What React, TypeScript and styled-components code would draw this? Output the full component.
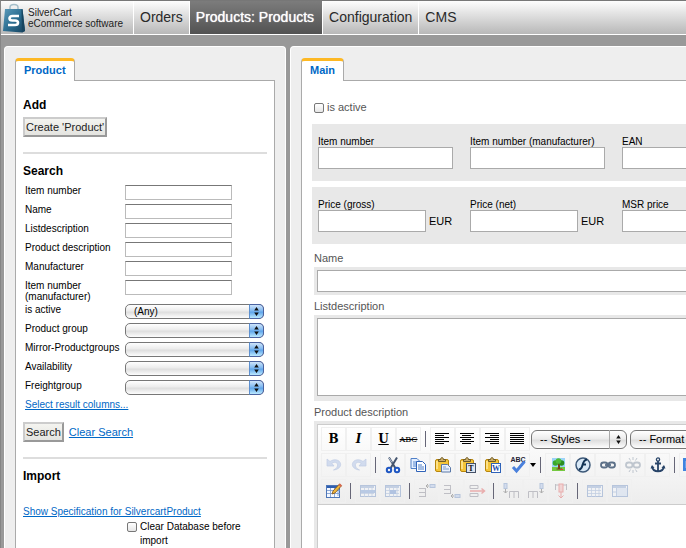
import React from "react";
import styled, { createGlobalStyle, css } from "styled-components";

const GlobalStyle = createGlobalStyle`
  * { box-sizing: border-box; }
  body {
    margin: 0;
    background: #999;
    font-family: "Liberation Sans", Arial, sans-serif;
    font-size: 11px;
    color: #000;
  }
  input, select, button, textarea { font-family: inherit; margin: 0; }
  h2, form, nav { margin: 0; }
`;

/* ---------- page frame ---------- */

const Page = styled.div`
  height: 100vh;
  overflow: hidden;
  display: flex;
  flex-direction: column;
  border-top: 1px solid #777;
  border-left: 1px solid #858585;
`;

const Header = styled.header`
  display: flex;
  flex: none;
  height: 34px;
  background: linear-gradient(#fdfdfd, #b8b8b8);
  border-bottom: 1px solid #fff;
`;

const Brand = styled.a`
  display: flex;
  align-items: center;
  gap: 3px;
  width: 133px;
  padding-left: 2px;
  border-right: 1px solid #fff;
  color: #222;
  font-size: 10px;
  line-height: 11px;
  text-decoration: none;
  white-space: nowrap;
`;

const Nav = styled.nav`
  display: flex;
`;

const NavLink = styled.a<{ $active?: boolean; $last?: boolean }>`
  display: flex;
  align-items: center;
  padding: 0 6px 1px;
  border-right: ${(p) => (p.$last ? "none" : "1px solid #fff")};
  color: #2a2a2a;
  font-size: 14px;
  text-decoration: none;
  white-space: nowrap;
  ${(p) =>
    p.$active &&
    css`
      padding: 0 8px 1px 6px;
      color: #fff;
      background: linear-gradient(#7c7c7c, #525252);
      text-shadow: 0 0 1px #fff;
    `}
`;

const Workspace = styled.div`
  display: flex;
  flex: 1;
  gap: 4px;
  min-height: 0;
  padding: 11px 0 0 3px;
`;

const panel = css`
  display: flex;
  flex-direction: column;
  padding: 11px 10px 0 10px;
  background: #eee;
  border: 1px solid #fff;
  border-bottom: none;
  border-radius: 4px 4px 0 0;
`;

const Sidebar = styled.aside`
  ${panel}
  flex: none;
  width: 282px;
`;

const Main = styled.main`
  ${panel}
  flex: 1;
  min-width: 640px;
`;

const TabStrip = styled.div`
  display: flex;
  margin-bottom: -1px;
  z-index: 1;
`;

const Tab = styled.a`
  padding: 3px 8px 4px;
  background: #fff;
  border: 1px solid #aaa;
  border-top: 3px solid #fdb824;
  border-bottom: none;
  border-radius: 4px 4px 0 0;
  color: #0068c6;
  font-size: 11px;
  font-weight: bold;
  line-height: 13px;
  text-decoration: none;
`;

const Sheet = styled.section`
  flex: 1;
  background: #fff;
  border: 1px solid #aaa;
  border-bottom: none;
`;

/* ---------- sidebar ---------- */

const SideSheet = styled(Sheet)`
  padding: 17px 7px 0;
`;

const Heading = styled.h2`
  font-size: 12px;
  line-height: 14px;
`;

const Rule = styled.hr`
  height: 2px;
  margin: 15px 0 10px;
  border: none;
  background: #ddd;
`;

const Button = styled.button`
  height: 20px;
  padding: 0 1px;
  border: 2px solid;
  border-color: #ccc #999 #999 #ccc;
  background: linear-gradient(#f4f4f0, #e4e4e0);
  color: #222;
  font-size: 11px;
  line-height: 14px;
`;

const Link = styled.a`
  color: #0068c6;
  text-decoration: underline;
`;

const AddForm = styled.form`
  padding-top: 5px;
`;

const Fields = styled.div`
  padding: 7px 0 0 2px;
  font-size: 10px;
  line-height: 11px;
`;

const FieldRow = styled.div<{ $tall?: boolean }>`
  display: grid;
  grid-template-columns: 100px 1fr;
  align-items: start;
  height: ${(p) => (p.$tall ? "24px" : "19px")};
`;

const FieldLabel = styled.label`
  white-space: pre-line;
`;

const SearchInput = styled.input`
  width: 107px;
  height: 15px;
  padding: 0 2px;
  border: 1px solid #bbb;
  border-top: 1px solid #777;
  background: #fff;
  font-size: 10px;
`;

const ActionRow = styled.div`
  display: flex;
  align-items: center;
  gap: 5px;
  padding-top: 12px;
`;

const ImportBlock = styled.div`
  padding-top: 22px;
  font-size: 10px;
  line-height: 14px;
`;

const ClearChoice = styled.label`
  display: flex;
  align-items: flex-start;
  gap: 3px;
  width: 130px;
  margin: 1px 0 0 104px;
`;

const Check = styled.input`
  flex: none;
  appearance: none;
  width: 10px;
  height: 10px;
  border: 1px solid #777;
  border-radius: 2px;
  background: linear-gradient(#fff, #e6e6e6);
  &:checked { background: #3875d7; }
`;

const ClearCheck = styled(Check)`
  margin-top: 2px;
`;

/* ---------- pop-up selects ---------- */

const Popup = styled.span<{ $kind: "aqua" | "plain" }>`
  display: grid;
  width: ${(p) => (p.$kind === "aqua" ? "139px" : "96px")};
  height: ${(p) => (p.$kind === "aqua" ? "15px" : "19px")};
`;

const PopupSelect = styled.select<{ $kind: "aqua" | "plain" }>`
  grid-area: 1 / 1;
  appearance: none;
  width: 100%;
  height: 100%;
  padding: 0 18px 0 8px;
  border: 1px solid #777;
  border-radius: ${(p) => (p.$kind === "aqua" ? "5px" : "6px")};
  background: linear-gradient(#fff, #ececec 45%, #dedede 55%, #fdfdfd);
  color: #000;
  font-size: ${(p) => (p.$kind === "aqua" ? "10px" : "11px")};
`;

const PopupArrows = styled.span<{ $kind: "aqua" | "plain" }>`
  grid-area: 1 / 1;
  justify-self: end;
  display: grid;
  place-items: center;
  width: ${(p) => (p.$kind === "aqua" ? "15px" : "18px")};
  pointer-events: none;
  ${(p) =>
    p.$kind === "aqua"
      ? css`
          border: 1px solid #4a62a0;
          border-left-color: #5d90cf;
          border-radius: 0 5px 5px 0;
          background: linear-gradient(#cfe4fa, #7fb8f0 45%, #5fa5ea 55%, #bdeaff);
        `
      : css`
          border-left: 1px solid #aaa;
        `}
`;

function SelectBox({ kind = "aqua", ...rest }: {
  kind?: "aqua" | "plain";
  id?: string;
  label?: string;
  options: string[];
}) {
  return (
    <Popup $kind={kind}>
      <PopupSelect $kind={kind} id={rest.id} aria-label={rest.label}>
        {rest.options.map((o) => (
          <option key={o}>{o}</option>
        ))}
      </PopupSelect>
      <PopupArrows $kind={kind}>
        <svg width="7" height="11" viewBox="0 0 7 11" fill="#111">
          <path d="M3.5 1 5.8 4.4H1.2zM3.5 10 5.8 6.6H1.2z" />
        </svg>
      </PopupArrows>
    </Popup>
  );
}

/* ---------- product form ---------- */

const FormSheet = styled(Sheet)`
  padding: 20px 0 0 10px;
`;

const ActiveLabel = styled.label`
  display: flex;
  align-items: center;
  gap: 3px;
  padding: 0 2px 10px;
  color: #555;
  line-height: 13px;
`;

const Group = styled.div`
  display: grid;
  grid-template-columns: repeat(3, 152px);
  height: 57px;
  margin-bottom: 6px;
  padding: 12px 6px 0;
  background: #e8e8e8;
`;

const GroupField = styled.div`
  display: flex;
  flex-wrap: wrap;
  align-items: center;
  align-content: flex-start;
  column-gap: 3px;
`;

const GroupLabel = styled.label`
  width: 100%;
  font-size: 10px;
  line-height: 11px;
`;

const TextInput = styled.input<{ $size: "price" | "code" | "full" }>`
  width: ${(p) => ({ price: "108px", code: "135px", full: "100%" })[p.$size]};
  height: 22px;
  padding: 0 3px;
  border: 1px solid #aaa;
  background: #fff;
  font-size: 11px;
`;

const WideField = styled.div`
  padding-left: 2px;
  margin-bottom: 4px;
`;

const WideLabel = styled.label`
  display: block;
  padding-bottom: 2px;
  color: #555;
  line-height: 14px;
`;

const WideBox = styled.div`
  padding: 3px;
  background: #e8e8e8;
`;

const TextArea = styled.textarea`
  display: block;
  width: 100%;
  height: 78px;
  margin-bottom: 2px;
  border: 1px solid #aaa;
  resize: none;
`;

const GroupWrap = styled.div`
  padding-bottom: 1px;
`;

/* ---------- rich text editor ---------- */

const Editor = styled.div`
  background: #fff;
  border: 1px solid #ccc;
`;

const Toolbar = styled.div`
  padding: 1px 3px 0;
  background: linear-gradient(#fff, #ededed);
  border-bottom: 1px solid #ccc;
`;

const ToolRow = styled.div`
  display: flex;
  align-items: center;
  height: 26px;
`;

const Tool = styled.button<{ $dim?: boolean; $narrow?: boolean }>`
  flex: none;
  display: grid;
  place-items: center;
  width: ${(p) => (p.$narrow ? "6px" : "25px")};
  height: 24px;
  padding: 0;
  border: ${(p) => (p.$narrow ? "none" : "1px solid #f0f0f0")};
  background: none;
  color: #000;
  & > svg { opacity: ${(p) => (p.$dim ? 0.35 : 1)}; }
`;

const Glyph = styled.span<{ $look: "bold" | "italic" | "under" | "strike" }>`
  font-family: "DejaVu Serif", serif;
  font-size: ${(p) => (p.$look === "strike" ? "8px" : "12px")};
  font-weight: ${(p) => (p.$look === "strike" ? "normal" : "bold")};
  font-style: ${(p) => (p.$look === "italic" ? "italic" : "normal")};
  text-decoration: ${(p) =>
    ({ bold: "none", italic: "none", under: "underline", strike: "line-through" })[p.$look]};
`;

const Divider = styled.span`
  flex: none;
  width: 1px;
  height: 16px;
  margin: 0 4px;
  background: #667;
`;

const StyleSelects = styled.div`
  display: flex;
  gap: 3px;
  padding-left: 1px;
`;

const EditArea = styled.textarea`
  display: block;
  width: 100%;
  height: 200px;
  border: none;
  resize: none;
`;

const Svg = ({ children }: { children: React.ReactNode }) => (
  <svg width="18" height="18" viewBox="0 0 18 18" fill="none">
    {children}
  </svg>
);

const Lines = ({ at }: { at: "left" | "center" | "right" | "full" }) => (
  <Svg>
    {[0, 1, 2, 3, 4, 5].map((i) => {
      const w = at === "full" || i % 2 === 0 ? 14 : 9;
      const x = at === "right" ? 15 - w : at === "center" ? 1 + Math.floor((14 - w) / 2) : 1;
      return <rect key={i} x={x} y={3 + i * 2} width={w} height="1" fill="#000" />;
    })}
  </Svg>
);

const UndoIcon = ({ flip }: { flip?: boolean }) => (
  <Svg>
    <g transform={flip ? "translate(18 0) scale(-1 1)" : undefined}>
      <path d="M2 3v7h7L6.800 7.300C10 5 13.500 7 12.500 10c-.5 2-2 3-4 4 5-.5 7.800-3.500 7-6.500C14.500 3.600 9 2.500 5 5.500z" fill="#8fabe0" stroke="#5d80c4" strokeWidth=".7" />
    </g>
  </Svg>
);

const CutIcon = () => (
  <Svg>
    <path d="M5 1.500 11.300 12M13 1.500 6.700 12" stroke="#44546e" strokeWidth="2" />
    <path d="M5.200 2 8 6.500" stroke="#b9c5d6" />
    <circle cx="5" cy="14" r="2.200" stroke="#1e56c2" strokeWidth="2" />
    <circle cx="13" cy="14" r="2.200" stroke="#1e56c2" strokeWidth="2" />
  </Svg>
);

const CopyIcon = () => (
  <Svg>
    <path d="M2 2.500h6l2.500 2.500v7.500H2z" fill="#e4efff" stroke="#5080c8" />
    <path d="M4 6h4M4 8h4M4 10h4" stroke="#5b8ad0" />
    <path d="M7.500 5.500h6L16.500 8.500v7h-9z" fill="#fff" stroke="#2f62b8" />
    <path d="M9 9h4M9 11h6M9 13h6" stroke="#4a7cc8" />
  </Svg>
);

const PasteIcon = ({ mark }: { mark?: "T" | "W" }) => (
  <Svg>
    <rect x="1.500" y="3.500" width="13" height="12" rx="1.500" fill="#f5c538" stroke="#b8860b" />
    <path d="M3 5v8" stroke="#ffeaa0" strokeWidth="1.500" />
    <path d="M4.500 5.500v-2h2c0-2.500 3-2.500 3 0h2v2z" fill="#c9ad6a" stroke="#6f5a24" />
    {mark ? (
      <>
        <rect x="7.500" y="7.500" width="9" height="9" fill={mark === "T" ? "#dde6f2" : "#fff"} stroke={mark === "T" ? "#445066" : "#2f62b8"} />
        <text x="12" y="15" textAnchor="middle" fontFamily="Liberation Serif, serif" fontWeight="bold" fontSize="8" fill={mark === "T" ? "#111" : "#1d4fb0"}>
          {mark}
        </text>
      </>
    ) : (
      <>
        <path d="M7.500 8.500h6l3 3v4.500h-9z" fill="#e9f0fb" stroke="#5a78a8" />
        <path d="M9 11h3M9 13h6" stroke="#7d9cca" />
      </>
    )}
  </Svg>
);

const SpellIcon = () => (
  <Svg>
    <text x="9" y="6" textAnchor="middle" fontFamily="Liberation Sans, sans-serif" fontWeight="bold" fontSize="7" fill="#223">
      ABC
    </text>
    <path d="M4 11 7.500 15 15.500 5.500" stroke="#4a80dc" strokeWidth="3" />
  </Svg>
);

const CaretIcon = () => (
  <svg width="6" height="4" viewBox="0 0 6 4">
    <path d="M0 0h6L3 4z" fill="#000" />
  </svg>
);

const TreeIcon = () => (
  <Svg>
    <rect x="3" y="2" width="13" height="13" fill="#9cd4f8" />
    <rect x="3" y="11" width="13" height="4" fill="#74c840" />
    <path d="M9 7h2v5.500h2v1H7.500v-1H9z" fill="#7a3f18" />
    <circle cx="6.500" cy="7" r="2.800" fill="#3aa82a" />
    <circle cx="12.500" cy="7" r="2.800" fill="#2c8c20" />
    <circle cx="9.500" cy="5" r="2.800" fill="#50bc38" />
    <path d="M12 13.500h2" stroke="#e33" />
  </Svg>
);

const FlashIcon = () => (
  <Svg>
    <circle cx="9" cy="9" r="7" fill="#d8e8f6" stroke="#3c5878" strokeWidth="1.500" />
    <path d="M13 3.500C8.500 4 9 9.500 7.500 11.800c-.6 1.200-1.500 1.700-2.700 1.700M8.500 8.500h3.500" stroke="#123456" strokeWidth="2" />
  </Svg>
);

const LinkIcon = ({ broken }: { broken?: boolean }) => (
  <Svg>
    <g stroke="#5c7088" strokeWidth="1.800">
      <rect x="2" y="6.500" width="6.500" height="5" rx="2.500" />
      <rect x="9.500" y="6.500" width="6.500" height="5" rx="2.500" />
      {broken ? (
        <path d="M9 1v3M5 2l1.500 2.500M13 2l-1.500 2.500M9 14v3M5 16l1.500-2.500M13 16l-1.500-2.500" strokeWidth="1" />
      ) : (
        <path d="M6 9h6" />
      )}
    </g>
  </Svg>
);

const AnchorIcon = () => (
  <Svg>
    <circle cx="9" cy="3.500" r="1.600" stroke="#284468" strokeWidth="1.300" />
    <path d="M9 5v10.500M6 7.500h6M3 10.500c.5 3 3 4.800 6 4.800s5.500-1.800 6-4.800" stroke="#284468" strokeWidth="1.800" />
    <path d="M1.500 12.500 3 9l2.500 2.800zM16.500 12.500 15 9l-2.500 2.800z" fill="#284468" />
  </Svg>
);

const HtmlIcon = () => (
  <Svg>
    <rect x="0" y="2" width="16" height="13" fill="#3f83e0" />
    <path d="M3.500 5v7M7.500 5v7M3.500 8.500h4M12 5v7" stroke="#fff" strokeWidth="1.500" />
  </Svg>
);

const GridIcon = ({ kind }: { kind: "edit" | "row" | "cell" | "split" | "merge" }) => (
  <Svg>
    <rect x="1.500" y="3.500" width={kind === "edit" ? 13 : 15} height={kind === "edit" ? 12 : 11} fill="#f4f8ff" stroke="#4d76b8" />
    <path d="M2 5h13" stroke={kind === "edit" ? "#2f5fb0" : "#7294cc"} strokeWidth="2" />
    {kind === "merge" ? (
      <path d="M5.500 6v8M2 10h3" stroke="#7294cc" />
    ) : (
      <path d="M2 8.500h13M2 11.500h13M5.500 6v9M9.500 6v9M13 6v8" stroke="#7294cc" strokeWidth=".8" />
    )}
    {kind === "merge" && <rect x="6" y="6" width="10" height="8" fill="#c4d6f2" />}
    {kind === "row" && <rect x="2" y="8" width="14" height="3" fill="#5685d0" />}
    {kind === "cell" && <rect x="6" y="8" width="6" height="4" fill="#3f72c8" />}
    {kind === "edit" && (
      <>
        <path d="M7 12 8 9l6.500-7 2 1.800L10 11z" fill="#f0b63c" stroke="#7c5316" strokeWidth=".8" />
        <path d="m13.500 3 2 2L17 3.500 15 1.500z" fill="#d86850" />
      </>
    )}
  </Svg>
);

const LineEditIcon = ({ kind }: { kind: "before" | "after" | "remove" }) => (
  <Svg>
    {kind === "remove" ? (
      <>
        <path d="M2 3.500h8v3H2zM2 11.500h8v3H2z" stroke="#667" />
        <path d="M2 9h14M13.500 6.500 16.500 9l-3 2.500" stroke="#d33" strokeWidth="1.500" />
      </>
    ) : (
      <g transform={kind === "after" ? "translate(0 18) scale(1 -1)" : undefined}>
        <path d="M1 6.500h6M1 10.500h6M1 14.500h6M7.500 6v9" stroke="#667" />
        <path d="M8 4h3M10 2 8 4l2 2" stroke="#333" />
        <rect x="12" y="2.500" width="5" height="3" fill="#9db8e8" stroke="#4d76b8" />
      </g>
    )}
  </Svg>
);

const ColumnEditIcon = ({ kind }: { kind: "before" | "after" | "remove" }) => (
  <Svg>
    <g transform={kind === "after" ? "translate(18 0) scale(-1 1)" : undefined}>
      {kind === "remove" ? (
        <>
          <path d="M3.500 2v6M14.500 2v6M3 3h12" stroke="#667" />
          <rect x="7" y="2" width="4" height="8" fill="#f2a0a0" stroke="#d33" />
          <path d="M9 10v6M6.500 13.500 9 16l2.500-2.500" stroke="#d33" />
        </>
      ) : (
        <>
          <rect x="2" y="1.500" width="3" height="5" fill="#9db8e8" stroke="#4d76b8" />
          <path d="M3.500 7v4M1.500 9l2 2 2-2" stroke="#333" />
          <path d="M7.500 16V9.500h9V16M12 9.500V16" stroke="#667" />
        </>
      )}
    </g>
  </Svg>
);

const BagLogo = () => (
  <svg width="22" height="30" viewBox="0 0 22 30" fill="none">
    <defs>
      <linearGradient id="bag" x1="0" y1="0" x2="1" y2="1">
        <stop offset="0" stopColor="#5b9bbb" />
        <stop offset=".5" stopColor="#2d6f92" />
        <stop offset="1" stopColor="#16415d" />
      </linearGradient>
    </defs>
    <path d="M7 9V4.500C7 .5 15 .5 15 4.500V9" stroke="#a6bfca" strokeWidth="1.500" />
    <path d="M2 6h17.500L22 28 19 29.500 0 28z" fill="url(#bag)" />
    <path d="M18.500 6.500 19 29.500l3-1.500L19.500 6z" fill="#174560" />
    <path d="M16 13H9.500c-4 0-4 4.500 0 4.500H12c4 0 4 4.500 0 4.500H5" stroke="#fff" strokeWidth="2.600" />
  </svg>
);

const textFields = [
  "Item number",
  "Name",
  "Listdescription",
  "Product description",
  "Manufacturer",
  "Item number\n(manufacturer)",
];
const choiceFields = ["is active", "Product group", "Mirror-Productgroups", "Availability", "Freightgroup"];
const codeFields = ["Item number", "Item number (manufacturer)", "EAN"];
const priceFields = [
  { label: "Price (gross)", unit: "EUR" },
  { label: "Price (net)", unit: "EUR" },
  { label: "MSR price" },
];

export default function App() {
  return (
    <>
      <GlobalStyle />
      <Page>
        <Header>
          <Brand href="#">
            <BagLogo />
            <span>
              SilverCart
              <br />
              eCommerce software
            </span>
          </Brand>
          <Nav>
            <NavLink href="#">Orders</NavLink>
            <NavLink href="#" $active>
              Products: Products
            </NavLink>
            <NavLink href="#">Configuration</NavLink>
            <NavLink href="#" $last>
              CMS
            </NavLink>
          </Nav>
        </Header>
        <Workspace>
          <Sidebar>
            <TabStrip>
              <Tab href="#">Product</Tab>
            </TabStrip>
            <SideSheet>
              <Heading>Add</Heading>
              <AddForm>
                <Button type="button">Create 'Product'</Button>
              </AddForm>
              <Rule />
              <Heading>Search</Heading>
              <form>
                <Fields>
                  {textFields.map((label, i) => (
                    <FieldRow key={label} $tall={label.includes("\n")}>
                      <FieldLabel htmlFor={`text-${i}`}>{label}</FieldLabel>
                      <SearchInput id={`text-${i}`} />
                    </FieldRow>
                  ))}
                  {choiceFields.map((label, i) => (
                    <FieldRow key={label}>
                      <FieldLabel htmlFor={`choice-${i}`}>{label}</FieldLabel>
                      <SelectBox id={`choice-${i}`} options={[i === 0 ? "(Any)" : ""]} />
                    </FieldRow>
                  ))}
                  <Link href="#">Select result columns...</Link>
                </Fields>
                <ActionRow>
                  <Button type="button">Search</Button>
                  <Link href="#">Clear Search</Link>
                </ActionRow>
              </form>
              <Rule />
              <Heading>Import</Heading>
              <ImportBlock>
                <Link href="#">Show Specification for SilvercartProduct</Link>
                <ClearChoice>
                  <ClearCheck type="checkbox" />
                  <span>Clear Database before import</span>
                </ClearChoice>
              </ImportBlock>
            </SideSheet>
          </Sidebar>
          <Main>
            <TabStrip>
              <Tab href="#">Main</Tab>
            </TabStrip>
            <FormSheet>
              <ActiveLabel>
                <Check type="checkbox" />
                is active
              </ActiveLabel>
              <GroupWrap>
                <Group>
                  {codeFields.map((label, i) => (
                    <GroupField key={label}>
                      <GroupLabel htmlFor={`code-${i}`}>{label}</GroupLabel>
                      <TextInput id={`code-${i}`} $size="code" />
                    </GroupField>
                  ))}
                </Group>
                <Group>
                  {priceFields.map(({ label, unit }, i) => (
                    <GroupField key={label}>
                      <GroupLabel htmlFor={`price-${i}`}>{label}</GroupLabel>
                      <TextInput id={`price-${i}`} $size="price" />
                      {unit}
                    </GroupField>
                  ))}
                </Group>
              </GroupWrap>
              <WideField>
                <WideLabel htmlFor="name">Name</WideLabel>
                <WideBox>
                  <TextInput id="name" $size="full" />
                </WideBox>
              </WideField>
              <WideField>
                <WideLabel htmlFor="list-description">Listdescription</WideLabel>
                <WideBox>
                  <TextArea id="list-description" />
                </WideBox>
              </WideField>
              <WideField>
                <WideLabel htmlFor="product-description">Product description</WideLabel>
                <WideBox>
                  <Editor>
                    <Toolbar>
                      <ToolRow>
                        <Tool type="button" aria-label="Bold"><Glyph $look="bold">B</Glyph></Tool>
                        <Tool type="button" aria-label="Italic"><Glyph $look="italic">I</Glyph></Tool>
                        <Tool type="button" aria-label="Underline"><Glyph $look="under">U</Glyph></Tool>
                        <Tool type="button" aria-label="Strikethrough"><Glyph $look="strike">ABC</Glyph></Tool>
                        <Divider />
                        <Tool type="button" aria-label="Align left"><Lines at="left" /></Tool>
                        <Tool type="button" aria-label="Align center"><Lines at="center" /></Tool>
                        <Tool type="button" aria-label="Align right"><Lines at="right" /></Tool>
                        <Tool type="button" aria-label="Justify"><Lines at="full" /></Tool>
                        <StyleSelects>
                          <SelectBox kind="plain" label="Styles" options={["-- Styles --"]} />
                          <SelectBox kind="plain" label="Format" options={["-- Format --"]} />
                        </StyleSelects>
                      </ToolRow>
                      <ToolRow>
                        <Tool type="button" $dim aria-label="Undo"><UndoIcon /></Tool>
                        <Tool type="button" $dim aria-label="Redo"><UndoIcon flip /></Tool>
                        <Divider />
                        <Tool type="button" aria-label="Cut"><CutIcon /></Tool>
                        <Tool type="button" aria-label="Copy"><CopyIcon /></Tool>
                        <Tool type="button" aria-label="Paste"><PasteIcon /></Tool>
                        <Tool type="button" aria-label="Paste as text"><PasteIcon mark="T" /></Tool>
                        <Tool type="button" aria-label="Paste from Word"><PasteIcon mark="W" /></Tool>
                        <Tool type="button" aria-label="Spell check"><SpellIcon /></Tool>
                        <Tool type="button" $narrow aria-label="Spell check languages"><CaretIcon /></Tool>
                        <Divider />
                        <Tool type="button" aria-label="Insert image"><TreeIcon /></Tool>
                        <Tool type="button" aria-label="Insert flash"><FlashIcon /></Tool>
                        <Tool type="button" aria-label="Insert link"><LinkIcon /></Tool>
                        <Tool type="button" $dim aria-label="Remove link"><LinkIcon broken /></Tool>
                        <Tool type="button" aria-label="Anchor"><AnchorIcon /></Tool>
                        <Divider />
                        <Tool type="button" aria-label="Edit HTML"><HtmlIcon /></Tool>
                      </ToolRow>
                      <ToolRow>
                        <Tool type="button" aria-label="Table"><GridIcon kind="edit" /></Tool>
                        <Divider />
                        <Tool type="button" $dim aria-label="Row properties"><GridIcon kind="row" /></Tool>
                        <Tool type="button" $dim aria-label="Cell properties"><GridIcon kind="cell" /></Tool>
                        <Divider />
                        <Tool type="button" $dim aria-label="Insert row before"><LineEditIcon kind="before" /></Tool>
                        <Tool type="button" $dim aria-label="Insert row after"><LineEditIcon kind="after" /></Tool>
                        <Tool type="button" $dim aria-label="Delete row"><LineEditIcon kind="remove" /></Tool>
                        <Divider />
                        <Tool type="button" $dim aria-label="Insert column before"><ColumnEditIcon kind="before" /></Tool>
                        <Tool type="button" $dim aria-label="Insert column after"><ColumnEditIcon kind="after" /></Tool>
                        <Tool type="button" $dim aria-label="Delete column"><ColumnEditIcon kind="remove" /></Tool>
                        <Divider />
                        <Tool type="button" $dim aria-label="Split cells"><GridIcon kind="split" /></Tool>
                        <Tool type="button" $dim aria-label="Merge cells"><GridIcon kind="merge" /></Tool>
                      </ToolRow>
                    </Toolbar>
                    <EditArea id="product-description" />
                  </Editor>
                </WideBox>
              </WideField>
            </FormSheet>
          </Main>
        </Workspace>
      </Page>
    </>
  );
}
